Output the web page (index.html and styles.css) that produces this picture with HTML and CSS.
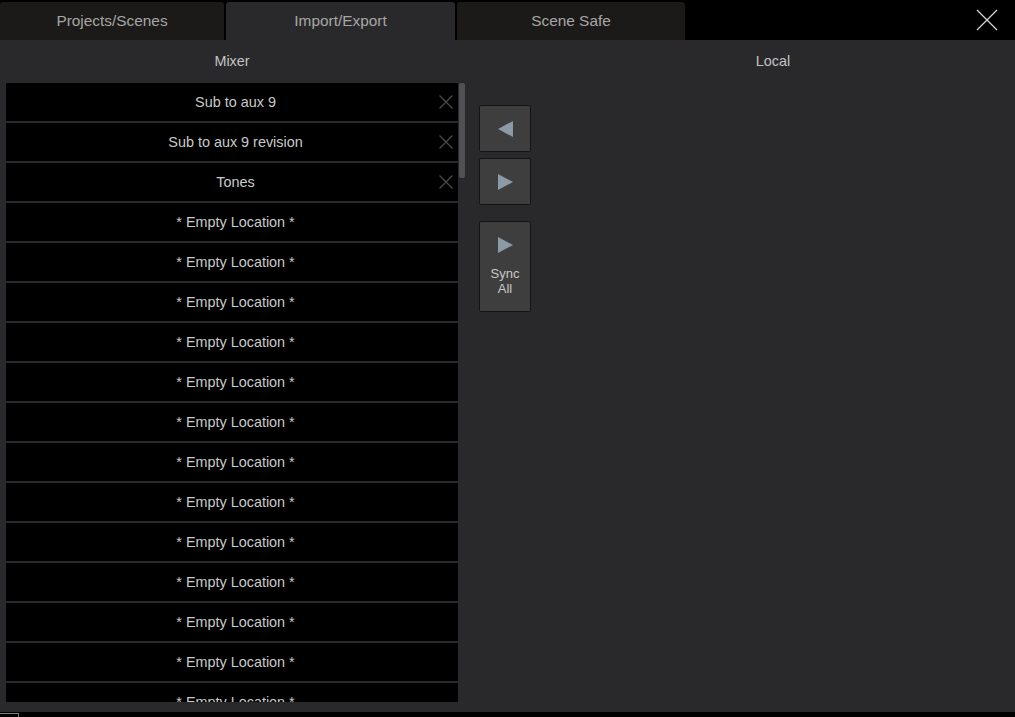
FILE: index.html
```html
<!DOCTYPE html>
<html lang="en">
<head>
  <meta charset="UTF-8">
  <title>Import/Export</title>
  <link rel="stylesheet" href="styles.css">
</head>
<body>

  <div class="topbar">
    <div class="tabs">
      <div class="tab">Projects/Scenes</div>
      <div class="tab active">Import/Export</div>
      <div class="tab">Scene Safe</div>
    </div>
    <div class="close">
      <svg width="22" height="22" viewBox="0 0 22 22">
        <path d="M1 1 L21 21 M21 1 L1 21" stroke="#d8d8d8" stroke-width="1.2" fill="none"/>
      </svg>
    </div>
  </div>

  <div class="panel">
    <div class="mixer">
      <div class="col-title">Mixer</div>
      <div class="list-wrap">
        <div class="scene-list" id="mixer-list"></div>
        <div class="scroll-thumb"></div>
      </div>
    </div>

    <div class="transfer">
      <button class="btn"><span class="tri left"></span></button>
      <button class="btn"><span class="tri right"></span></button>
      <button class="btn sync"><span class="tri right"></span><span class="btn-label">Sync<br>All</span></button>
    </div>

    <div class="local">
      <div class="col-title">Local</div>
    </div>
  </div>

  <div class="statusbar">
    <div class="status-box"></div>
  </div>

  <script>
    const scenes = ["Sub to aux 9", "Sub to aux 9 revision", "Tones"];
    const totalSlots = 16;

    const list = document.getElementById("mixer-list");
    for (let i = 0; i < totalSlots; i++) {
      const row = document.createElement("div");
      row.className = "scene";
      const name = document.createElement("span");
      name.textContent = i < scenes.length ? scenes[i] : "* Empty Location *";
      row.appendChild(name);
      if (i < scenes.length) {
        // delete button for stored scenes
        const del = document.createElement("span");
        del.className = "del";
        del.innerHTML = '<svg width="14" height="14" viewBox="0 0 14 14"><path d="M0.5 0.5 L13.5 13.5 M13.5 0.5 L0.5 13.5" stroke="#4a4a4a" stroke-width="1.2"/></svg>';
        row.appendChild(del);
      }
      list.appendChild(row);
    }
  </script>

</body>
</html>
```

FILE: styles.css
```css
body {
  margin: 0;
  width: 1015px;
  height: 717px;
  overflow: hidden;
  background: #000;
  font-family: "Liberation Sans", Arial, sans-serif;
}

.topbar {
  height: 40px;
  background: #000;
  display: flex;
  justify-content: space-between;
}
.tabs {
  display: flex;
  gap: 2px;
  padding-top: 2px;
}
.tab {
  height: 38px;
  line-height: 37px;
  text-align: center;
  font-size: 15.4px;
  color: #a6a6a6;
  background: #1c1a18;
  border-radius: 3px 3px 0 0;
}
.tab:nth-child(1) { width: 224px; }
.tab:nth-child(2) { width: 229px; }
.tab:nth-child(3) { width: 228px; }
.tab.active {
  background: #29292b;
}
.close {
  width: 22px;
  height: 22px;
  margin: 9px 17px 0 0;
}

.panel {
  height: 672px;
  background: #29292b;
  display: flex;
}

.col-title {
  height: 43px;
  line-height: 42px;
  text-align: center;
  font-size: 14.4px;
  color: #c4c4c4;
}

.mixer {
  width: 465px;
  padding-left: 6px;
}
.mixer .col-title {
  width: 452px;
}
.list-wrap {
  position: relative;
  height: 619px;
  overflow: hidden;
}
.scene-list {
  display: flex;
  flex-direction: column;
  gap: 2px;
}
.scene {
  position: relative;
  width: 445px;
  height: 38px;
  padding-left: 7px;
  background: #000;
  display: flex;
  align-items: center;
  justify-content: center;
  font-size: 14.4px;
  color: #cacaca;
}
.del {
  position: absolute;
  right: 5px;
  top: 12px;
  height: 14px;
}
.scroll-thumb {
  position: absolute;
  left: 453px;
  top: 0;
  width: 6px;
  height: 95px;
  background: #4f5152;
  border-radius: 2px;
}

.transfer {
  display: flex;
  flex-direction: column;
  gap: 6px;
  padding: 65px 0 0 8px;
}
.btn {
  width: 52px;
  height: 47px;
  padding: 0;
  background: #3e3e3e;
  border: 1px solid #141414;
  border-radius: 2px;
  display: flex;
  flex-direction: column;
  align-items: center;
  justify-content: center;
  cursor: pointer;
}
.btn.sync {
  height: 91px;
  margin-top: 10px;
  justify-content: flex-start;
  padding-top: 15px;
}
.tri {
  width: 0;
  height: 0;
  border-top: 8px solid transparent;
  border-bottom: 8px solid transparent;
}
.tri.left {
  border-right: 15px solid #8b9aa7;
}
.tri.right {
  border-left: 15px solid #8b9aa7;
}
.btn-label {
  margin-top: 13px;
  font-family: "Liberation Sans", Arial, sans-serif;
  font-size: 13px;
  line-height: 15px;
  color: #c8c8c8;
}

.local {
  flex: 1;
}

.statusbar {
  height: 5px;
  background: #000;
}
.status-box {
  width: 18px;
  height: 4px;
  margin-top: 1px;
  border: 1px solid #7a7a7a;
  border-bottom: none;
  border-left: none;
}
```
